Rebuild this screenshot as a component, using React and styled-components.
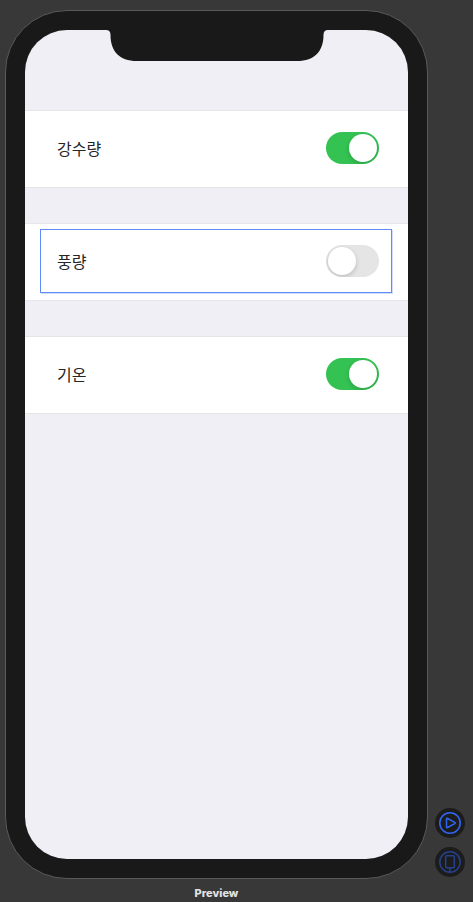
import { useState } from "react";
import styled, { createGlobalStyle } from "styled-components";

const GlobalStyle = createGlobalStyle`
  * {
    box-sizing: border-box;
  }
  body {
    margin: 0;
    background: #383838;
  }
`;

const Canvas = styled.div`
  display: flex;
  min-height: 100vh;
  padding: 10px 8px 0 5px;
  gap: 7px;
  font-family: Inter, "Noto Sans CJK KR", sans-serif;
`;

const PreviewColumn = styled.main`
  display: flex;
  flex: 1;
  flex-direction: column;
`;

const Phone = styled.div`
  display: flex;
  flex: 1;
  padding: 19px;
  border: 1px solid #5a5a5a;
  border-radius: 62px;
  background: #191919;
`;

const Screen = styled.div`
  flex: 1;
  overflow: hidden;
  border-radius: 42px;
  background: #f0eff6;
`;

const StatusBar = styled.div`
  display: flex;
  justify-content: center;
  height: 80px;
`;

const Caption = styled.div`
  height: 23px;
  padding-top: 2px;
  color: #e2e2e2;
  font-size: 11px;
  font-weight: 800;
  line-height: 24px;
  text-align: center;
`;

const List = styled.div`
  display: flex;
  flex-direction: column;
  gap: 35px;
`;

const Section = styled.div`
  height: 78px;
  padding: 5px 16px 7px 15px;
  border-top: 1px solid #e6e6e9;
  border-bottom: 1px solid #e6e6e9;
  background: #fff;
`;

const Row = styled.label`
  display: flex;
  align-items: center;
  justify-content: space-between;
  height: 64px;
  padding: 0 12px 0 16px;
  border: 1px solid ${(props) => (props.$selected ? "#5f8bf7" : "transparent")};
  box-shadow: ${(props) => (props.$selected ? "1px 1px 0 #cfdcfc" : "none")};
  color: #262626;
  font-family: "Noto Sans CJK KR", sans-serif;
  font-size: 16px;
  line-height: 24px;
`;

const Switch = styled.input`
  appearance: none;
  display: flex;
  align-items: center;
  justify-content: ${(props) => (props.checked ? "flex-end" : "flex-start")};
  width: 53px;
  height: 32px;
  margin: 0;
  padding: 0 2px;
  overflow: hidden;
  border-radius: 16px;
  background: ${(props) => (props.checked ? "#34c352" : "#e5e5e5")};
  cursor: pointer;

  &::before {
    content: "";
    width: 28px;
    height: 28px;
    border-radius: 50%;
    background: #fff;
    box-shadow: 0 2px 5px rgba(0, 0, 0, 0.18);
  }
`;

const Toolbar = styled.aside`
  display: flex;
  flex-direction: column;
  justify-content: flex-end;
  gap: 9px;
  padding-bottom: 25px;
`;

const ToolButton = styled.button`
  display: flex;
  width: 30px;
  height: 30px;
  padding: 0;
  border: none;
  border-radius: 50%;
  background: #1c1c1c;
  color: ${(props) => props.$color};
  cursor: pointer;
`;

function Notch() {
  return (
    <svg width="222" height="31" viewBox="0 0 222 31" aria-hidden="true">
      <path
        d="M0 0C3 0 4.500 1.500 4.500 5C4.500 21 13 31 31 31H191C209 31 217.500 21 217.500 5C217.500 1.500 219 0 222 0Z"
        fill="#191919"
      />
    </svg>
  );
}

function PlayIcon() {
  return (
    <svg width="30" height="30" fill="none" stroke="currentColor">
      <circle cx="15" cy="15" r="10.200" strokeWidth="1.600" />
      <path
        d="M11.500 11.200V18.800Q11.500 20 12.600 19.500L19.700 15.700Q20.800 15 19.700 14.300L12.600 10.500Q11.500 10 11.500 11.200Z"
        strokeWidth="1.500"
      />
    </svg>
  );
}

function DeviceIcon() {
  return (
    <svg width="30" height="30" fill="none" stroke="currentColor">
      <circle cx="15" cy="15" r="10.200" strokeWidth="1.500" />
      <rect x="10.700" y="8.800" width="8.600" height="12" rx="1" strokeWidth="1.500" />
      <path d="M15 21V25" strokeWidth="1.500" />
    </svg>
  );
}

function App() {
  const [items, setItems] = useState([
    { name: "강수량", on: true },
    { name: "풍량", on: false },
    { name: "기온", on: true },
  ]);
  const selected = 1;

  const toggle = (index) => {
    setItems(
      items.map((item, i) => (i === index ? { ...item, on: !item.on } : item))
    );
  };

  return (
    <Canvas>
      <GlobalStyle />
      <PreviewColumn>
        <Phone>
          <Screen>
            <StatusBar>
              <Notch />
            </StatusBar>
            <List>
              {items.map((item, index) => (
                <Section key={item.name}>
                  <Row $selected={index === selected}>
                    {item.name}
                    <Switch
                      type="checkbox"
                      checked={item.on}
                      onChange={() => toggle(index)}
                    />
                  </Row>
                </Section>
              ))}
            </List>
          </Screen>
        </Phone>
        <Caption>Preview</Caption>
      </PreviewColumn>
      <Toolbar>
        <ToolButton $color="#2f66f0" aria-label="Play">
          <PlayIcon />
        </ToolButton>
        <ToolButton $color="#26418c" aria-label="Device">
          <DeviceIcon />
        </ToolButton>
      </Toolbar>
    </Canvas>
  );
}

export default App;
